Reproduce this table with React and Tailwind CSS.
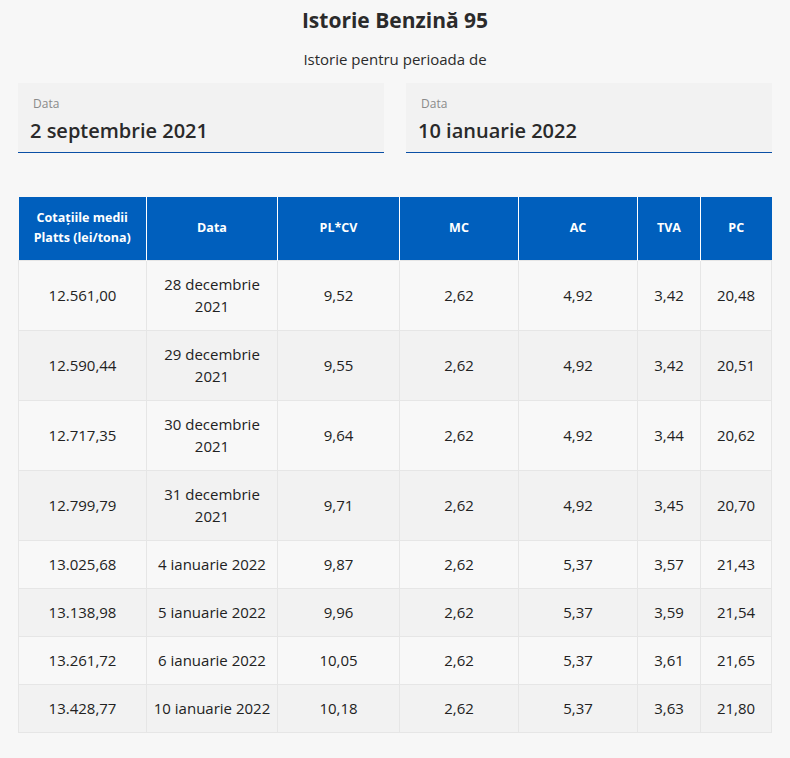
import React from "react";

const rows = [
  ["12.561,00", "28 decembrie 2021", "9,52", "2,62", "4,92", "3,42", "20,48"],
  ["12.590,44", "29 decembrie 2021", "9,55", "2,62", "4,92", "3,42", "20,51"],
  ["12.717,35", "30 decembrie 2021", "9,64", "2,62", "4,92", "3,44", "20,62"],
  ["12.799,79", "31 decembrie 2021", "9,71", "2,62", "4,92", "3,45", "20,70"],
  ["13.025,68", "4 ianuarie 2022", "9,87", "2,62", "5,37", "3,57", "21,43"],
  ["13.138,98", "5 ianuarie 2022", "9,96", "2,62", "5,37", "3,59", "21,54"],
  ["13.261,72", "6 ianuarie 2022", "10,05", "2,62", "5,37", "3,61", "21,65"],
  ["13.428,77", "10 ianuarie 2022", "10,18", "2,62", "5,37", "3,63", "21,80"],
];

const widths = [128, 131, 122, 119, 119, 63, 71];

function DateField({ value }) {
  return (
    <div className="flex-1 h-[70px] bg-[#f2f2f2] border-b-[1.5px] border-[#0a4fa6] flex flex-col">
      <span className="pl-[15px] pt-[13px] text-[12px] leading-[16px] text-[#8a8a8a]">Data</span>
      <span className="pl-3 pt-[6px] text-[20px] leading-[26px] font-semibold text-[#2a2a2a]">{value}</span>
    </div>
  );
}

export default function App() {
  return (
    <div
      className="w-[790px] h-[758px] bg-[#f7f7f7] text-[#222]"
      style={{ fontFamily: '"Open Sans", "Noto Sans", sans-serif' }}
    >
      <div className="px-[18px] pt-[6px]">
        <h1 className="text-center text-[21px] leading-[28px] font-bold text-[#2b2b2b]">Istorie Benzină 95</h1>
        <p className="text-center text-[15px] leading-[20px] mt-[15px] text-[#2b2b2b]">Istorie pentru perioada de</p>
        <div className="flex gap-[22px] mt-[14px]">
          <DateField value="2 septembrie 2021" />
          <DateField value="10 ianuarie 2022" />
        </div>
        <table className="mt-[44px] w-[753px] table-fixed border-collapse text-center">
          <colgroup>
            {widths.map((w, i) => (
              <col key={i} style={{ width: w }} />
            ))}
          </colgroup>
          <thead>
            <tr className="bg-[#005fbd] text-white text-[12.5px] leading-[20px] font-bold h-[63px]">
              <th className="px-2 border-r border-white">Cotațiile medii Platts (lei/tona)</th>
              <th className="px-2 border-r border-white">Data</th>
              <th className="px-2 border-r border-white">PL*CV</th>
              <th className="px-2 border-r border-white">MC</th>
              <th className="px-2 border-r border-white">AC</th>
              <th className="px-2 border-r border-white">TVA</th>
              <th className="px-2">PC</th>
            </tr>
          </thead>
          <tbody className="text-[15px] leading-[22px]">
            {rows.map((r, i) => (
              <tr key={i} className={i % 2 === 0 ? "bg-[#f8f8f8]" : "bg-[#f2f2f2]"}>
                {r.map((c, j) => (
                  <td key={j} className="border border-[#e6e6e6] py-[12.5px] px-[4px]">
                    {j === 1 && c.includes("decembrie") ? (
                      <>
                        {c.replace(" 2021", "")}
                        <br />
                        2021
                      </>
                    ) : (
                      c
                    )}
                  </td>
                ))}
              </tr>
            ))}
          </tbody>
        </table>
      </div>
    </div>
  );
}
